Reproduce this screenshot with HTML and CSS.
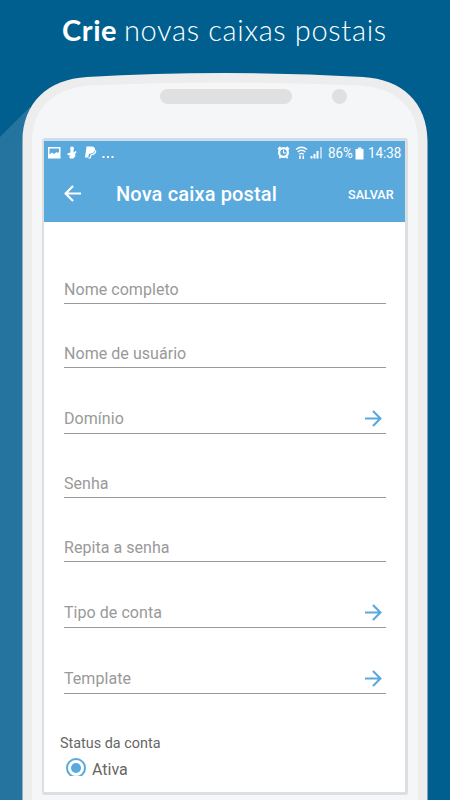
FILE: index.html
```
<!DOCTYPE html>
<html lang="pt-BR">
<head>
<meta charset="utf-8">
<title>Nova caixa postal</title>
<link rel="stylesheet" href="styles.css">
</head>
<body>
<main class="promo">
  <svg class="backdrop" viewBox="0 0 450 800" aria-hidden="true">
    <path fill="#24749f" d="M0 137 30 107V796L26 800H0Z"/>
    <path fill="#ededed" d="M22.500 800V141C22.500 103 48 79 87 77Q155 73 225 73T363 77C402 79 427.500 103 427.500 141V800Z"/>
    <path fill="#f5f6f8" d="M32 800V141C32 108 54 88 91 85.500Q157 82.500 225 82.500T359 85.500C396 88 418 108 418 141V800Z"/>
  </svg>
  <h1 class="headline"><b>Crie</b><span>novas caixas postais</span></h1>
  <div class="speaker"><i class="slot"></i><i class="camera"></i></div>
  <section class="screen">
    <header class="appbar">
      <div class="status">
        <svg class="notices" viewBox="0 0 70 16" fill="#fff" aria-hidden="true">
          <path fill-rule="evenodd" d="M0 2h12.500v11.500H0ZM1.500 3.500v6l2.500-2 2 1.500 2.500-2 1 1 1.500-1v-3.500Z"/>
          <circle cx="24" cy="3.500" r="2"/>
          <path d="M22.500 5h3v2.500l2-1.500 1.200 1-1.700 2 .5 2-2 2.500h-3.500l-1-1.500 1.500-1.500-3-.5v-1.500l3-1Z"/>
          <path d="M38.500 1.500h5.500q3 .3 3 3-.3 4-5 4.200h-1l-.8 3.800h-3.200Z"/>
          <path d="M47.600 4.500q1 1 .6 2.500-.8 3-4.700 3.200l-.7 3.300h-2.800l.2-1h1.500l.8-3q4.500-.3 5.100-5Z"/>
          <path d="M54.500 11h2v2h-2ZM59 11h2v2h-2ZM63.500 11h2v2h-2Z"/>
        </svg>
        <svg class="signals" viewBox="0 0 50 16" fill="none" stroke="#fff" aria-hidden="true">
          <circle cx="8.500" cy="7.500" r="4.400" stroke-width="2.200"/>
          <path stroke-width="1.700" d="M3 4.300 5.500 2M11.500 2 14 4.300M4.300 13l1.200-1M12.700 13l-1.200-1"/>
          <path d="M8.500 5v3H11"/>
          <path stroke-width="1.400" d="M21 4.500q5.500-4.500 11 0M22.700 7q3.800-3.300 7.600 0M24.300 9.300q2.200-1.800 4.400 0"/>
          <path stroke-width="1.500" d="M25 10.500v3.500M28.300 10.500v3.500"/>
          <path stroke-width="2" d="M36.500 13.500V11M39.500 13.500V9M42.500 13.500V6"/><path stroke-width="2" opacity=".55" d="M46 13.500V2"/>
        </svg>
        <span class="percent">86%</span>
        <svg class="battery" viewBox="0 0 9 13" aria-hidden="true"><path fill="#fff" d="M.5 2H3V.5h3.500V2h2v10.500h-8Z"/></svg>
        <span class="clock">14:38</span>
      </div>
      <div class="toolbar">
        <svg class="arrow" viewBox="0 0 16 16" aria-hidden="true"><path d="M16 8H1.500M8.500 1 1.500 8l7 7"/></svg>
        <h2>Nova caixa postal</h2>
        <span class="save">SALVAR</span>
      </div>
    </header>
    <form class="form">
      <div class="field"><span>Nome completo</span></div>
      <div class="field"><span>Nome de usuário</span></div>
      <div class="field pick"><span>Domínio</span><svg class="arrow" viewBox="0 0 16 16"><path d="M0 8h14.500M7.500 1l7 7-7 7"/></svg></div>
      <div class="field"><span>Senha</span></div>
      <div class="field"><span>Repita a senha</span></div>
      <div class="field pick"><span>Tipo de conta</span><svg class="arrow" viewBox="0 0 16 16"><path d="M0 8h14.500M7.500 1l7 7-7 7"/></svg></div>
      <div class="field pick"><span>Template</span><svg class="arrow" viewBox="0 0 16 16"><path d="M0 8h14.500M7.500 1l7 7-7 7"/></svg></div>
    </form>
    <div class="account">
      <div class="label">Status da conta</div>
      <div class="option">
        <svg class="radio" viewBox="0 0 20 18"><circle cx="10" cy="10" r="9" fill="none" stroke="#5aa9dd" stroke-width="2"/><circle cx="10" cy="10" r="5" fill="#5aa9dd"/></svg>
        <span>Ativa</span>
      </div>
    </div>
  </section>
</main>
</body>
</html>
```
FILE: styles.css
```
* { box-sizing: border-box; }
body { margin: 0; font-family: Roboto, "Liberation Sans", sans-serif; }
.promo {
  position: relative;
  display: flex;
  flex-direction: column;
  width: 450px;
  height: 800px;
  overflow: hidden;
  background: #005f8f;
}
.promo > * { position: relative; }
.promo > .backdrop { position: absolute; inset: 0; }
.headline {
  display: flex;
  gap: 7px;
  height: 89px;
  margin: 0;
  padding: 13px 0 0 62px;
  color: #fff;
  font: 300 29px/34px Lato, sans-serif;
  white-space: nowrap;
}
.headline b { width: 55px; font-weight: 700; letter-spacing: .6px; }
.headline span { letter-spacing: .66px; }
.speaker { display: flex; gap: 40px; height: 49px; padding-left: 160px; }
.slot { width: 132px; height: 15px; border-radius: 8px; background: #e0e0e0; }
.camera { width: 15px; height: 15px; border-radius: 50%; background: #e0e0e0; }
.screen {
  width: 366px;
  height: 657px;
  margin-left: 42px;
  border: 2px solid #dcdee1;
  border-top: 3px solid #d0dce7;
  border-right-width: 3px;
  border-bottom-width: 3px;
  border-radius: 3px;
  background: #fff;
}
.appbar { height: 81px; background: #5aa9dd; color: #fff; }
.status { display: flex; align-items: center; height: 24px; padding-left: 4px; font-size: 15.500px; }
.status > * { flex: none; }
.notices { width: 70px; height: 16px; }
.signals { width: 50px; height: 16px; margin-left: 157px; }
.percent { width: 26px; margin-left: 3px; white-space: nowrap; }
.percent, .clock { transform: scaleX(.86); transform-origin: left; }
.battery { width: 9px; height: 13px; margin-left: 1px; }
.clock { margin-left: 4px; }
.toolbar { display: flex; align-items: center; height: 57px; padding: 0 0 1px 20px; }
.arrow { width: 17px; height: 17px; fill: none; stroke: #fff; stroke-width: 2; }
.toolbar h2 { width: 232px; margin: 2px 0 0 35px; font-size: 20px; font-weight: 500; letter-spacing: .15px; white-space: nowrap; }
.save { margin-top: 2px; font-size: 12.600px; font-weight: 500; }
.form { display: flex; flex-direction: column; width: 322px; margin: 18px 0 0 20px; }
.field {
  display: flex;
  justify-content: space-between;
  align-items: flex-end;
  height: 64px;
  padding-bottom: 4px;
  border-bottom: 1px solid #999;
  color: #999;
  font-size: 16px;
  letter-spacing: .05px;
  line-height: 18px;
}
.field.pick { height: 66px; padding-bottom: 5px; }
.field .arrow { margin: 0 4px 1px 0; stroke: #5aa9dd; }
.account { padding: 41px 0 0 16px; color: #666; font-size: 14.400px; line-height: 18px; }
.option { display: flex; height: 22px; margin-top: 5px; padding-left: 6px; font-size: 16px; line-height: 24px; }
.radio { width: 20px; height: 18px; margin-right: 6px; }
```
